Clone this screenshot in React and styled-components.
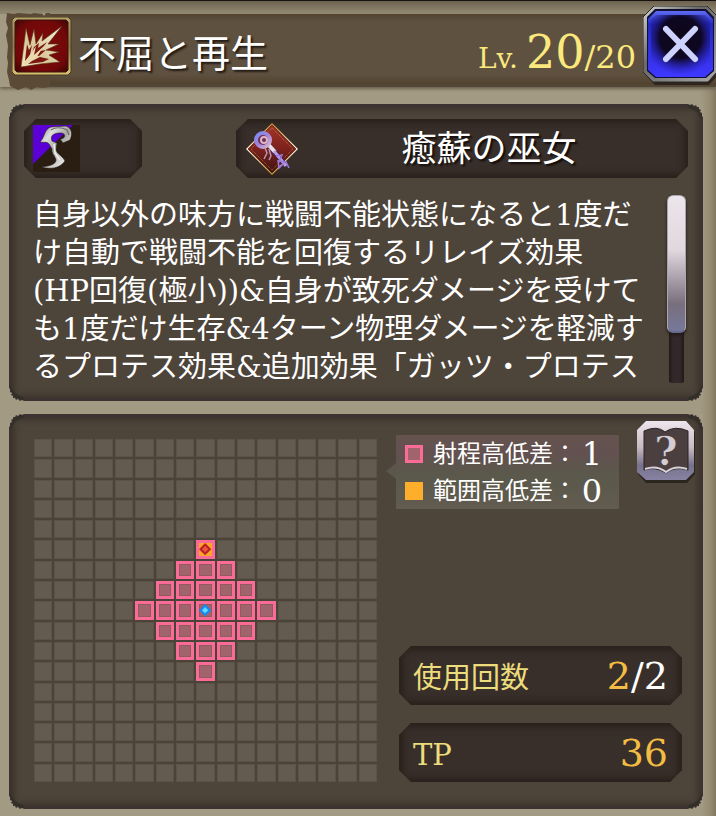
import React from 'react'
import styled, { createGlobalStyle } from 'styled-components'

const SIZE = 17
const CENTER = 8
const RANGE = 3

const lines = [
    '自身以外の味方に戦闘不能状態になると1度だ',
    'け自動で戦闘不能を回復するリレイズ効果',
    '(HP回復(極小))&自身が致死ダメージを受けて',
    'も1度だけ生存&4ターン物理ダメージを軽減す',
    'るプロテス効果&追加効果「ガッツ・プロテス',
]

const cells = Array.from({ length: SIZE * SIZE }, (_, i) => {
    const dx = Math.abs((i % SIZE) - CENTER)
    const dy = Math.floor(i / SIZE) - CENTER
    const inRange = dx + Math.abs(dy) <= RANGE
    if (dx === 0 && dy === 0) return 'self'
    if (dx === 0 && dy === -RANGE) return 'target'
    return inRange ? 'range' : 'empty'
})

const SkillIcon = () => (
    <svg width="60" height="60" viewBox="0 0 60 60" aria-hidden="true">
        <defs>
            <linearGradient id="gold" x1="0" y1="0" x2="0" y2="1">
                <stop offset="0" stopColor="#b5a367" />
                <stop offset="0.5" stopColor="#8f7b4c" />
                <stop offset="1" stopColor="#d8c26e" />
            </linearGradient>
            <radialGradient id="red" r="0.7">
                <stop offset="0" stopColor="#800a0b" />
                <stop offset="0.7" stopColor="#720809" />
                <stop offset="1" stopColor="#3c0506" />
            </radialGradient>
            <linearGradient id="burst" x1="1" y1="0" x2="0" y2="1">
                <stop offset="0" stopColor="#f8f2dc" />
                <stop offset="0.6" stopColor="#d9c79a" />
                <stop offset="1" stopColor="#f3e8c4" />
            </linearGradient>
        </defs>
        <path d="M3 0H56L59 3V55L56 58H3L0 55V3Z" fill="url(#gold)" stroke="#4a3b22" />
        <path d="M5 3H54L56 5V53L54 55H5L3 53V5Z" fill="url(#red)" stroke="#3a1510" />
        <path d="M9 50L14 11L18 28L22 12L24 27L31 16L30 24L50 9L36 27L47 27L34 33L47 35L37 38L48 45L28 47Z" fill="url(#burst)" stroke="#55300f" strokeWidth="0.6" />
        <path d="M15 27L17 33L20 28L18 38L13 44Z" fill="#7a1711" />
        <path d="M22 30L27 26L26 31L35 25L28 34L34 33L27 39L22 38L18 42Z" fill="#7a1711" />
        <path d="M20 44L28 40L37 42L31 45L16 47Z" fill="#7a1711" />
        <path d="M11 48L24 29L22 38L32 29L24 41L15 46Z" fill="#ead9ac" />
    </svg>
)

const WeaponIcon = () => (
    <svg width="47" height="47" viewBox="0 0 47 47" aria-hidden="true">
        <defs>
            <linearGradient id="steel" x1="0" y1="0" x2="1" y2="1">
                <stop offset="0" stopColor="#777" />
                <stop offset="0.25" stopColor="#dedede" />
                <stop offset="0.5" stopColor="#a7a7a5" />
                <stop offset="0.8" stopColor="#e4e4e2" />
                <stop offset="1" stopColor="#777" />
            </linearGradient>
        </defs>
        <rect width="47" height="47" fill="#2a1e13" />
        <path d="M0 0H40L0 39Z" fill="#5b00d6" />
        <path d="M7 17C12 12 11 4 18 2L33 1C39 3 40 9 37 15L30 18L27 14C33 14 33 8 28 8C21 8 17 10 19 16L24 18L23 25C25 30 30 31 32 36C27 43 18 45 8 42C17 41 23 39 23 35C22 31 18 28 19 24L16 19C13 16 11 18 7 17Z" fill="url(#steel)" stroke="#20170f" strokeWidth="0.6" />
        <path d="M18 5C22 2 29 2 34 5L36 10" fill="none" stroke="#6b6b6b" strokeWidth="1.2" />
        <path d="M21 19L22 28L27 35" fill="none" stroke="#f1f1f1" strokeWidth="1.5" />
    </svg>
)

const JobIcon = () => (
    <svg width="54" height="54" viewBox="0 0 54 54" aria-hidden="true">
        <defs>
            <linearGradient id="frame" x1="0" y1="0" x2="0" y2="1">
                <stop offset="0" stopColor="#c8892e" />
                <stop offset="0.5" stopColor="#fff1dc" />
                <stop offset="1" stopColor="#c8892e" />
            </linearGradient>
            <linearGradient id="ruby" x1="0" y1="0" x2="0" y2="1">
                <stop offset="0" stopColor="#a2352a" />
                <stop offset="0.5" stopColor="#7c211c" />
                <stop offset="1" stopColor="#3f1410" />
            </linearGradient>
            <linearGradient id="orb" x1="0" y1="0" x2="1" y2="1">
                <stop offset="0" stopColor="#7b8cf2" />
                <stop offset="0.5" stopColor="#a482d8" />
                <stop offset="1" stopColor="#d9b8d0" />
            </linearGradient>
        </defs>
        <path d="M27 1L53 27L27 53L1 27Z" fill="url(#frame)" />
        <path d="M27 3L51 27L27 51L3 27Z" fill="url(#ruby)" stroke="#3b130c" strokeWidth="0.6" />
        <path d="M27 6L48 27L27 48L6 27Z" fill="none" stroke="#c58b4a" strokeWidth="0.7" strokeDasharray="1 1" />
        <path d="M22 21L41 44" stroke="#3c205e" strokeWidth="5" />
        <path d="M22 21L30 30" stroke="#ece1e4" strokeWidth="4" />
        <path d="M29 29L41 44" stroke="#b9a0dc" strokeWidth="3" />
        <circle cx="18" cy="18" r="7" fill="#683258" stroke="url(#orb)" strokeWidth="4" />
        <circle cx="19" cy="18" r="3" fill="none" stroke="#e0b5c8" strokeWidth="2" />
        <path d="M20 26L22 31L19 37M24 27L26 34L24 38" fill="none" stroke="#b496b3" strokeWidth="1.5" />
        <path d="M31 34L37 33L34 39L41 40L44 46M33 38L34 46L39 41" fill="none" stroke="#9b76d8" strokeWidth="1.6" />
    </svg>
)

const CloseIcon = () => (
    <svg width="76" height="80" viewBox="0 0 76 80" aria-hidden="true">
        <defs>
            <linearGradient id="silver" x1="0" y1="0" x2="1" y2="1">
                <stop offset="0" stopColor="#d5d5d5" />
                <stop offset="0.4" stopColor="#696969" />
                <stop offset="1" stopColor="#a9a9a9" />
            </linearGradient>
            <linearGradient id="blue" x1="0" y1="0" x2="0" y2="1">
                <stop offset="0" stopColor="#5f6cf2" />
                <stop offset="0.2" stopColor="#2328c0" />
                <stop offset="1" stopColor="#3f38ff" />
            </linearGradient>
            <radialGradient id="night" cx="0.5" cy="0.38" r="0.64">
                <stop offset="0" stopColor="#0d0717" />
                <stop offset="0.55" stopColor="#0e0722" />
                <stop offset="1" stopColor="#2018b0" stopOpacity="0" />
            </radialGradient>
        </defs>
        <path d="M12 4H66L75 13V69L66 79H12L3 69V14Z" fill="#15110d" opacity="0.6" />
        <path d="M11 0H64L74 10V66L65 76H10L0 66V11Z" fill="url(#silver)" stroke="#292622" />
        <path d="M12 3H63L71 11V65L63 72H12L4 65V11Z" fill="#111033" />
        <path d="M13 5H62L70 13V64L62 71H13L5 64V13Z" fill="url(#blue)" />
        <path d="M13 9H62L67 14V62L61 68H14L8 62V14Z" fill="url(#night)" />
        <path d="M23 23L52 53M52 23L23 53" stroke="#cdd2ff" strokeWidth="6" strokeLinecap="round" />
    </svg>
)

const HelpIcon = () => (
    <svg width="58" height="62" viewBox="0 0 58 62" aria-hidden="true">
        <defs>
            <linearGradient id="pearl" x1="0" y1="0" x2="0" y2="1">
                <stop offset="0" stopColor="#eee6ee" />
                <stop offset="0.45" stopColor="#c9b9c0" />
                <stop offset="0.75" stopColor="#77728c" />
                <stop offset="1" stopColor="#8782a2" />
            </linearGradient>
        </defs>
        <path d="M10 3H50L58 11V53L50 62H9L1 53V11Z" fill="#2b2520" />
        <path d="M9 0H49L57 9V51L49 59H9L0 51V9Z" fill="url(#pearl)" />
        <path d="M7 10Q20 4 28 11Q38 4 51 10V49Q38 45 29 52Q18 45 7 49Z" fill="#4b3f3f" stroke="#2a2527" />
        <path d="M8 48Q20 44 29 51Q38 44 50 48" fill="none" stroke="#d8d3d8" strokeWidth="2" />
        <text x="29" y="44" textAnchor="middle" fontFamily="DejaVu Serif, serif" fontWeight="bold" fontSize="40" fill="#d5cdd3" stroke="#332c2e" strokeWidth="0.6">?</text>
    </svg>
)

const Corner = ({ place }) => (
    <CornerSvg $place={place} width="20" height="20" viewBox="0 0 20 20" aria-hidden="true">
        <path d="M0 0H15L13 1L11 0L9 2L7 1L6 3L4 3L4 5L2 6L3 8L1 9L1 12L0 13Z" fill="#a39a83" />
        <path d="M16 1L11 1L9 3L6 4L4 6L3 9L1 11L1 16L4 11L6 8L9 6L14 4Z" fill="#2e2c26" opacity="0.7" />
    </CornerSvg>
)

const Corners = () => (
    <>
        <Corner place="tl" />
        <Corner place="tr" />
        <Corner place="bl" />
        <Corner place="br" />
    </>
)

const App = () => {
    return (
        <>
            <GlobalStyle />
            <Page>
                <Header>
                    <TitleBar>
                        <Torn width="50" height="82" viewBox="0 0 50 82" aria-hidden="true">
                            <path d="M7 1L14 2L18 1L31 2L34 1L42 2L45 1H50V75L42 76L37 75L31 78L26 75L18 78L14 76L10 74L9 68L7 60L8 51L7 45L8 34L6 23L8 16L6 10Z" fill="#5a4a36" />
                            <path d="M42 1L44 4L46 1Z" fill="#a39a83" />
                        </Torn>
                        <SkillIcon />
                        <h1>不屈と再生</h1>
                        <Level>
                            <small>Lv.</small>
                            <strong>20</strong>
                            <span>/20</span>
                        </Level>
                    </TitleBar>
                    <CloseButton type="button" aria-label="閉じる">
                        <CloseIcon />
                    </CloseButton>
                </Header>
                <main>
                    <Panel>
                        <Corners />
                        <TagRow>
                            <Tag>
                                <WeaponIcon />
                            </Tag>
                            <Tag>
                                <JobIcon />
                                <h2>癒蘇の巫女</h2>
                            </Tag>
                        </TagRow>
                        <TextRow>
                            <p>
                                {lines.map(line => (
                                    <span key={line}>{line}</span>
                                ))}
                            </p>
                            <ScrollTrack>
                                <ScrollThumb />
                            </ScrollTrack>
                        </TextRow>
                    </Panel>
                    <RangePanel>
                        <Corners />
                        <Board role="img" aria-label="射程">
                            {cells.map((kind, i) => (
                                <Cell key={i} $kind={kind}>
                                    {kind === 'target' && (
                                        <svg viewBox="0 0 12 12"><path d="M6 0L12 6L6 12L0 6Z" fill="#bd2222" /><path d="M6 3L9 6L6 9L3 6Z" fill="#ef5540" /></svg>
                                    )}
                                    {kind === 'self' && (
                                        <svg viewBox="0 0 12 12"><path d="M6 0L12 6L6 12L0 6Z" fill="#168af0" /><path d="M6 3L9 6L6 9L3 6Z" fill="#62dcff" /></svg>
                                    )}
                                </Cell>
                            ))}
                        </Board>
                        <Side>
                            <SideTop>
                                <Legend>
                                    <div><Swatch $kind="range" /><dt>射程高低差：</dt><dd>1</dd></div>
                                    <div><Swatch $kind="area" /><dt>範囲高低差：</dt><dd>0</dd></div>
                                </Legend>
                                <HelpButton type="button" aria-label="ヘルプ">
                                    <HelpIcon />
                                </HelpButton>
                            </SideTop>
                            <Stats>
                                <Stat>
                                    <dt>使用回数</dt>
                                    <dd>2<span>/2</span></dd>
                                </Stat>
                                <Stat>
                                    <dt>TP</dt>
                                    <dd>36</dd>
                                </Stat>
                            </Stats>
                        </Side>
                    </RangePanel>
                </main>
            </Page>
        </>
    )
}

export default App

const GlobalStyle = createGlobalStyle`
    * {
        box-sizing: border-box;
    }
    body {
        margin: 0;
        background-color: #a39a83;
        color: white;
        font-family: "DejaVu Serif", "Noto Sans CJK JP", sans-serif;
    }
    h1, h2, p, dl, dd {
        margin: 0;
        font-weight: 400;
    }
    svg {
        display: block;
        flex-shrink: 0;
    }
    button {
        padding: 0;
        border: none;
        background: transparent;
        cursor: pointer;
    }
`

const Page = styled.div`
    min-height: 100vh;
    background: linear-gradient(to left, #81775f, #968c74 6px, #a39a83 16px);
    main {
        display: flex;
        flex-direction: column;
        gap: 13px;
        padding: 0 13px 7px 9px;
    }
`

const Header = styled.header`
    position: relative;
    overflow: hidden;
    padding: 13px 0 17px 0;
    border-top: 1px solid #17120f;
    background: linear-gradient(#6c624f, #958c74 13px, transparent 13px);
`

const TitleBar = styled.div`
    position: relative;
    display: flex;
    align-items: center;
    gap: 6px;
    height: 73px;
    padding: 0 80px 8px 12px;
    background: linear-gradient(to right, #a39a83 12px, transparent 12px), linear-gradient(#534431, #5f5140 8px, #5f5140 60px, #52432f 70px, #514938);
    box-shadow: 0 2px 3px #6b614e;
    > svg:not(:first-child) {
        position: relative;
    }
    h1 {
        position: relative;
        flex: 1;
        font-size: 38px;
        line-height: 56px;
        padding-top: 14px;
        white-space: nowrap;
        text-shadow: 2px 2px 2px #211a13;
    }
`

const Torn = styled.svg`
    position: absolute;
    left: 0;
    top: -2px;
`

const Level = styled.div`
    display: flex;
    align-items: baseline;
    padding-top: 18px;
    color: #fbe97e;
    line-height: 56px;
    small {
        margin-right: 8px;
        font-size: 28px;
    }
    strong {
        font-size: 46px;
        font-weight: 400;
    }
    span {
        font-size: 32px;
    }
`

const CloseButton = styled.button`
    position: absolute;
    top: 5px;
    right: -3px;
`

const Panel = styled.section`
    position: relative;
    padding: 15px;
    background-color: #4d443a;
    box-shadow: inset 0 0 0 3px #3e3233, inset 0 0 6px 5px #38302a;
`

const CornerSvg = styled.svg`
    position: absolute;
    top: ${({ $place }) => $place[0] === 't' ? '0' : 'auto'};
    bottom: ${({ $place }) => $place[0] === 'b' ? '0' : 'auto'};
    left: ${({ $place }) => $place[1] === 'l' ? '0' : 'auto'};
    right: ${({ $place }) => $place[1] === 'r' ? '0' : 'auto'};
    transform: scale(${({ $place }) => $place[1] === 'l' ? 1 : -1}, ${({ $place }) => $place[0] === 't' ? 1 : -1});
`

const TagRow = styled.div`
    display: grid;
    grid-template-columns: 118px minmax(0, 452px);
    justify-content: space-between;
`

const Tag = styled.div`
    display: flex;
    align-items: center;
    height: 59px;
    padding: 0 9px;
    background-color: #382f2b;
    box-shadow: inset 0 0 8px 3px #271d17;
    clip-path: polygon(12px 0, calc(100% - 12px) 0, 100% 12px, 100% calc(100% - 12px), calc(100% - 12px) 100%, 12px 100%, 0 calc(100% - 12px), 0 12px);
    h2 {
        flex: 1;
        font-size: 35px;
        line-height: 58px;
        text-align: center;
        text-shadow: 2px 2px 2px #120c08;
    }
`

const TextRow = styled.div`
    display: flex;
    justify-content: space-between;
    padding: 17px 2px 0 9px;
    p {
        padding-top: 1px;
        font-size: 29px;
        line-height: 38px;
        white-space: nowrap;
    }
    p span {
        display: block;
    }
`

const ScrollTrack = styled.div`
    width: 19px;
    height: 188px;
    flex-shrink: 0;
    border-radius: 5px;
    background: linear-gradient(to right, transparent 2px, #211a12 2px, #32282a 6px, #32282a 13px, #211a12 17px, transparent 17px);
`

const ScrollThumb = styled.div`
    height: 138px;
    border: 1px solid #aaa6ad;
    border-bottom: 2px solid #67698c;
    border-radius: 6px;
    background: linear-gradient(#ebe5ec, #e2d7df 40%, #776f7d 80%, #77789a);
    box-shadow: 0 2px 3px #211a17;
`

const RangePanel = styled(Panel)`
    display: grid;
    grid-template-columns: minmax(0, 343fr) minmax(0, 299fr);
    gap: 19px;
    padding: 7px 8px 27px 25px;
`

const Board = styled.div`
    display: grid;
    grid-template-columns: repeat(17, 1fr);
    gap: 2px;
    margin-top: 18px;
    align-self: start;
    background-color: #4b4238;
`

const fills = {
    empty: '#635b4f',
    range: '#a1636c',
    self: '#a1636c',
    target: '#ffa52b',
}

const Cell = styled.div`
    aspect-ratio: 1;
    border: ${({ $kind }) => $kind === 'empty' ? '1px solid #5b5347' : '3px solid #fb6b98'};
    background-color: ${({ $kind }) => fills[$kind]};
    box-shadow: ${({ $kind }) => $kind === 'range' || $kind === 'self' ? 'inset 0 0 0 1px #8e5c5d' : 'none'};
    svg {
        width: 100%;
        height: 100%;
        overflow: visible;
    }
`

const Side = styled.div`
    display: flex;
    flex-direction: column;
    justify-content: space-between;
`

const SideTop = styled.div`
    display: flex;
    justify-content: space-between;
    align-items: flex-start;
`

const Legend = styled.dl`
    position: relative;
    width: 223px;
    margin-top: 14px;
    padding: 0 9px;
    background: linear-gradient(#65534f, #625150 25%, #5a594b 55%, #625b50);
    &::before {
        content: "";
        position: absolute;
        left: -10px;
        top: 28px;
        border: 8px solid transparent;
        border-left: none;
        border-right: 10px solid #5b564b;
    }
    div {
        display: flex;
        align-items: center;
        height: 37px;
    }
    dt {
        margin-left: 10px;
        font-size: 24px;
        line-height: 36px;
        white-space: nowrap;
    }
    dd {
        width: 30px;
        font-size: 32px;
        line-height: 36px;
        text-align: center;
    }
`

const Swatch = styled.i`
    width: 18px;
    height: 18px;
    flex-shrink: 0;
    border: 3px solid ${({ $kind }) => $kind === 'range' ? '#fb6b98' : '#ffae2b'};
    background-color: ${({ $kind }) => $kind === 'range' ? '#a1636c' : '#ffae2b'};
`

const HelpButton = styled.button`
    width: 58px;
    height: 62px;
`

const Stats = styled.dl`
    display: flex;
    flex-direction: column;
    gap: 18px;
    margin: 0 13px 0 3px;
`

const Stat = styled(Tag)`
    justify-content: space-between;
    padding: 0 14px;
    dt {
        color: #ecdc7c;
        font-size: 29px;
        line-height: 58px;
        padding-top: 4px;
    }
    dd {
        color: #f3bd43;
        font-size: 38px;
        line-height: 58px;
    }
    dd span {
        color: white;
    }
`
